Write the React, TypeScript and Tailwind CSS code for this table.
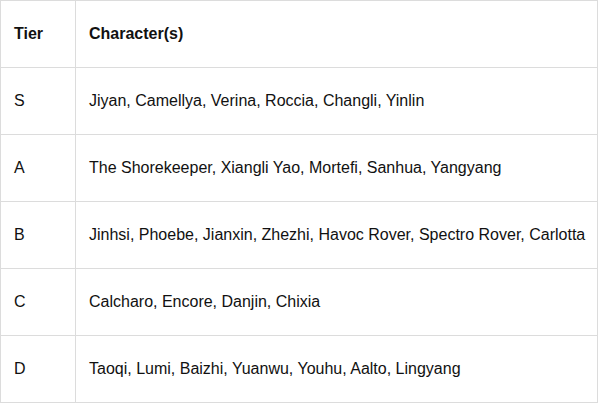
const rows: [string, string][] = [
  ["S", "Jiyan, Camellya, Verina, Roccia, Changli, Yinlin"],
  ["A", "The Shorekeeper, Xiangli Yao, Mortefi, Sanhua, Yangyang"],
  ["B", "Jinhsi, Phoebe, Jianxin, Zhezhi, Havoc Rover, Spectro Rover, Carlotta"],
  ["C", "Calcharo, Encore, Danjin, Chixia"],
  ["D", "Taoqi, Lumi, Baizhi, Yuanwu, Youhu, Aalto, Lingyang"],
];

export default function App() {
  return (
    <div className="w-[598px] h-[403px] bg-white font-['Liberation_Sans',Arial,sans-serif] text-[16px] text-[#111]">
      <table className="w-full border-collapse border border-[#e6e6e6]">
        <thead>
          <tr className="h-[67px]">
            <th className="w-[75px] border border-[#dcdcdc] pl-[13px] text-left font-bold">Tier</th>
            <th className="border border-[#dcdcdc] pl-[13px] text-left font-bold">Character(s)</th>
          </tr>
        </thead>
        <tbody>
          {rows.map(([tier, chars]) => (
            <tr key={tier} className="h-[67px]">
              <td className="border border-[#dcdcdc] pl-[13px]">{tier}</td>
              <td className="border border-[#dcdcdc] pl-[13px] whitespace-nowrap">{chars}</td>
            </tr>
          ))}
        </tbody>
      </table>
    </div>
  );
}
